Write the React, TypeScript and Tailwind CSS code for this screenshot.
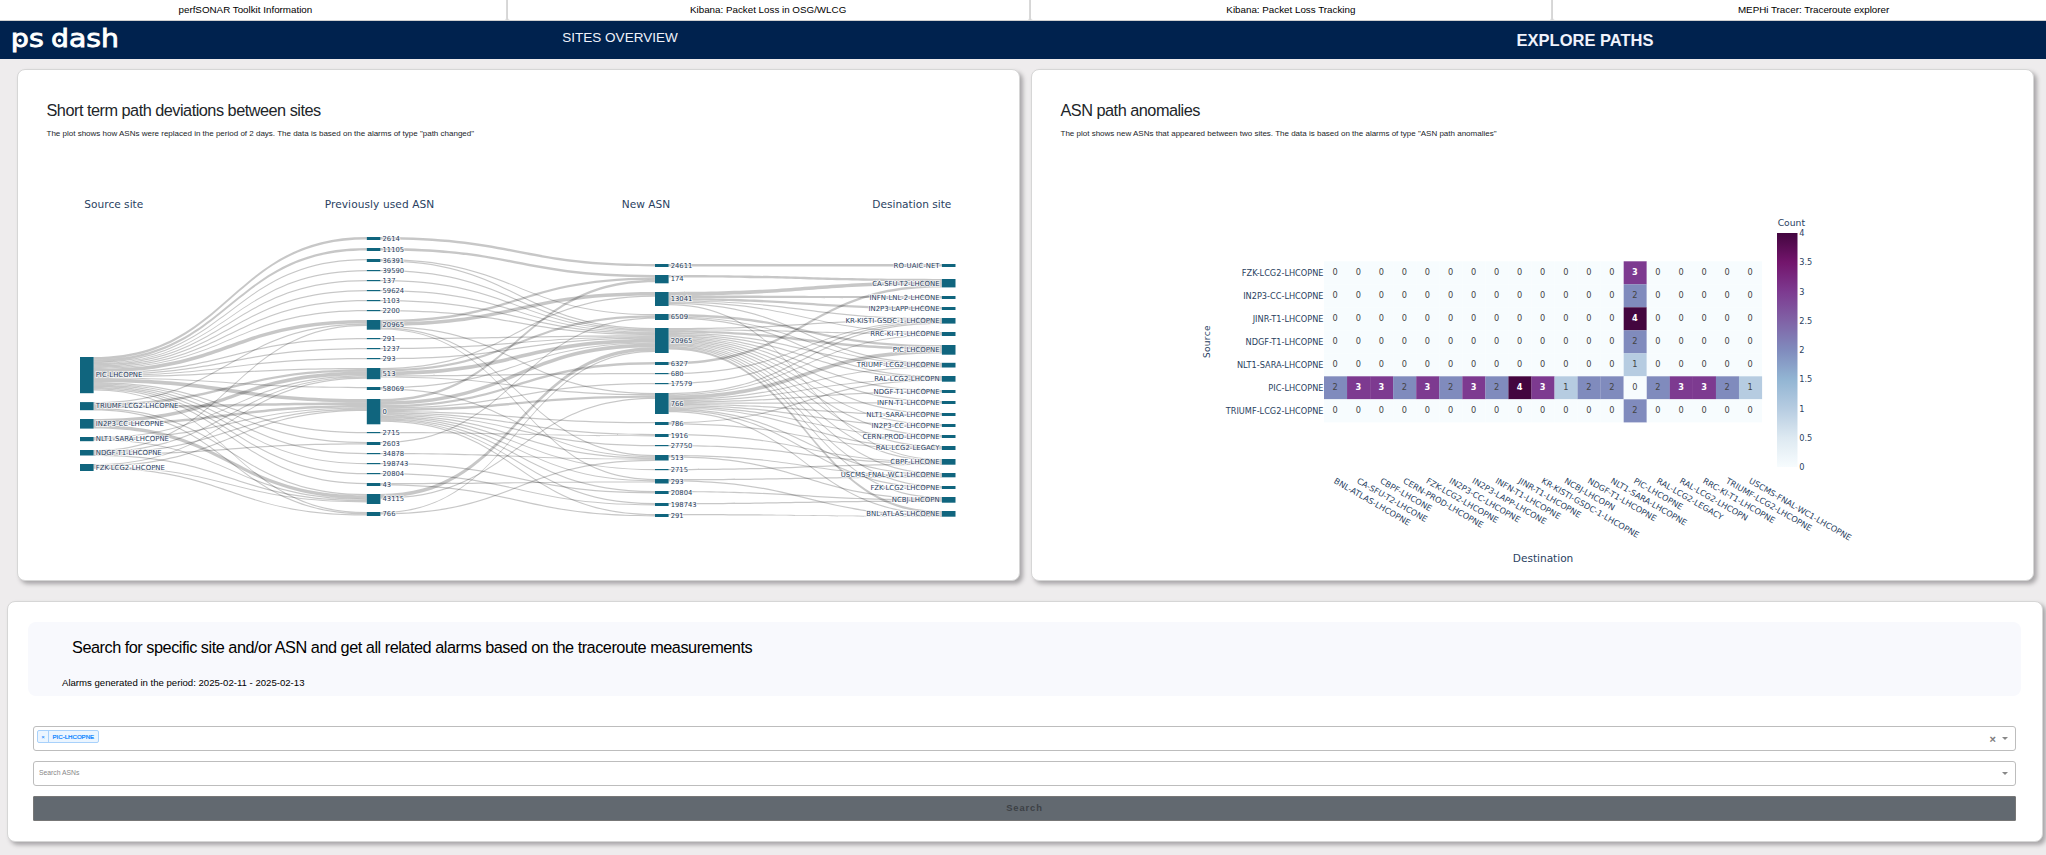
import React from "react";

type NodeDef = [label: string, top: number, bottom: number];
type LinkDef = [from: number, to: number, value: number];

const UNIT = 1.2;
const NODE_W = 13.6;
const COL_X = [80, 366.8, 655, 941.9];

const sources: NodeDef[] = [
  ["PIC-LHCOPNE", 357, 393.2],
  ["TRIUMF-LCG2-LHCOPNE", 402.1, 410.2],
  ["IN2P3-CC-LHCOPNE", 419, 428.6],
  ["NLT1-SARA-LHCOPNE", 437, 441.2],
  ["NDGF-T1-LHCOPNE", 450, 455.5],
  ["FZK-LCG2-LHCOPNE", 464, 471],
];

const previous: NodeDef[] = [
  ["2614", 237, 240],
  ["11105", 248, 251],
  ["36391", 259, 262],
  ["39590", 270, 271.2],
  ["137", 280, 281.2],
  ["59624", 290, 291.2],
  ["1103", 300, 301.2],
  ["2200", 310, 311.2],
  ["20965", 320, 329.7],
  ["291", 338, 339.2],
  ["1237", 348, 349.2],
  ["293", 358, 359.2],
  ["513", 368, 379.2],
  ["58069", 387, 390],
  ["0", 399, 424.3],
  ["2715", 432, 433.2],
  ["2603", 442, 445],
  ["34878", 453, 454.2],
  ["198743", 463, 464.2],
  ["20804", 473, 474.2],
  ["43", 483, 486],
  ["43115", 494, 504],
  ["766", 512, 516],
];

const next: NodeDef[] = [
  ["24611", 264, 267],
  ["174", 275, 283.3],
  ["13041", 292, 306],
  ["6509", 314, 320],
  ["20965", 328, 353],
  ["6327", 362, 365],
  ["680", 373, 374.2],
  ["17579", 383, 384.2],
  ["766", 393, 414],
  ["786", 422, 425],
  ["1916", 434, 437],
  ["27750", 445, 446.2],
  ["513", 455, 460.5],
  ["2715", 469, 470.2],
  ["293", 479, 483.5],
  ["20804", 491, 494],
  ["198743", 503, 506],
  ["291", 514, 517],
];

const destinations: NodeDef[] = [
  ["RO-UAIC-NET", 264, 267],
  ["CA-SFU-T2-LHCONE", 279, 287.4],
  ["INFN-LNL-2-LHCONE", 296, 299],
  ["IN2P3-LAPP-LHCONE", 307, 310],
  ["KR-KISTI-GSDC-1-LHCOPNE", 318, 323.6],
  ["RRC-KI-T1-LHCOPNE", 332, 336],
  ["PIC-LHCOPNE", 345, 354.7],
  ["TRIUMF-LCG2-LHCOPNE", 362.8, 367.5],
  ["RAL-LCG2-LHCOPN", 376, 381.7],
  ["NDGF-T1-LHCOPNE", 390, 393],
  ["INFN-T1-LHCOPNE", 401, 404],
  ["NLT1-SARA-LHCOPNE", 413, 416],
  ["IN2P3-CC-LHCOPNE", 424, 427],
  ["CERN-PROD-LHCOPNE", 435, 438],
  ["RAL-LCG2-LEGACY", 446, 450],
  ["CBPF-LHCONE", 459, 464.7],
  ["USCMS-FNAL-WC1-LHCOPNE", 473, 477.3],
  ["FZK-LCG2-LHCOPNE", 486, 489],
  ["NCBJ-LHCOPN", 497, 502.7],
  ["BNL-ATLAS-LHCOPNE", 511, 516.7],
];

const sourceLinks: LinkDef[] = [
  [0, 0, 2], [0, 1, 2], [0, 2, 1], [0, 3, 1], [0, 4, 1], [0, 5, 1], [0, 6, 1], [0, 7, 1],
  [0, 8, 3], [0, 9, 1], [0, 10, 1], [0, 11, 1], [0, 12, 1], [0, 13, 1], [0, 14, 3],
  [0, 15, 1], [0, 16, 1], [0, 17, 1], [0, 18, 1], [0, 19, 1], [0, 20, 1], [0, 22, 1],
  [1, 8, 1], [1, 12, 2], [1, 14, 2], [1, 21, 1], [1, 22, 1],
  [2, 12, 3], [2, 14, 2], [2, 21, 3],
  [3, 12, 1], [3, 14, 1], [3, 21, 1],
  [4, 8, 1], [4, 12, 1], [4, 14, 1], [4, 16, 1], [4, 21, 1],
  [5, 12, 1], [5, 14, 1], [5, 21, 1], [5, 22, 1],
];

const middleLinks: LinkDef[] = [
  [0, 0, 2], [1, 1, 2], [2, 3, 1], [2, 4, 1], [3, 4, 1], [4, 4, 1], [5, 4, 1], [6, 4, 1], [7, 4, 1],
  [8, 1, 2], [8, 2, 3], [8, 8, 1], [8, 12, 1], [8, 14, 1],
  [9, 4, 1], [10, 4, 1], [11, 4, 1],
  [12, 2, 1], [12, 3, 2], [12, 4, 3], [12, 6, 1], [12, 8, 1],
  [13, 4, 1], [13, 12, 1],
  [14, 1, 2], [14, 4, 3], [14, 5, 2], [14, 7, 1], [14, 8, 2], [14, 9, 1], [14, 10, 1], [14, 11, 1],
  [14, 12, 1], [14, 13, 1], [14, 14, 1], [14, 15, 1], [14, 16, 1], [14, 17, 1],
  [15, 10, 1], [16, 3, 1], [17, 12, 1], [18, 15, 1], [19, 16, 1], [20, 14, 1], [20, 17, 1],
  [21, 4, 3], [21, 8, 1], [22, 4, 1], [22, 12, 1],
];

const destinationLinks: LinkDef[] = [
  [0, 0, 2], [1, 1, 2],
  [2, 1, 3], [2, 2, 2], [2, 3, 2], [2, 4, 1], [2, 5, 1], [2, 7, 1], [2, 15, 1],
  [3, 6, 2], [3, 7, 1], [3, 8, 1],
  [4, 4, 1], [4, 5, 1], [4, 6, 2], [4, 7, 1], [4, 8, 1], [4, 9, 1], [4, 10, 1], [4, 11, 1], [4, 12, 1],
  [4, 13, 1], [4, 14, 1], [4, 15, 1], [4, 16, 1], [4, 17, 1], [4, 18, 1], [4, 19, 2],
  [5, 1, 2], [6, 4, 1], [7, 4, 1],
  [8, 4, 1], [8, 5, 1], [8, 6, 3], [8, 7, 1], [8, 8, 1], [8, 9, 1], [8, 10, 1], [8, 11, 1], [8, 12, 1],
  [8, 13, 1], [8, 14, 1], [8, 16, 1], [8, 17, 1], [8, 19, 1],
  [9, 8, 1], [9, 14, 1], [10, 15, 1], [11, 15, 1], [12, 18, 1], [12, 16, 1], [13, 15, 1],
  [14, 16, 1], [14, 19, 1], [15, 18, 1], [16, 18, 1], [17, 19, 1],
];

const ribbons = (left: NodeDef[], right: NodeDef[], links: LinkDef[], x0: number, x1: number) => {
  const startOf = new Map<LinkDef, number>();
  const endOf = new Map<LinkDef, number>();
  const leftOffset = left.map((n) => n[1]);
  const rightOffset = right.map((n) => n[1]);
  [...links].sort((a, b) => a[0] - b[0] || a[1] - b[1]).forEach((l) => {
    startOf.set(l, leftOffset[l[0]]);
    leftOffset[l[0]] += l[2] * UNIT;
  });
  [...links].sort((a, b) => a[1] - b[1] || a[0] - b[0]).forEach((l) => {
    endOf.set(l, rightOffset[l[1]]);
    rightOffset[l[1]] += l[2] * UNIT;
  });
  const mid = (x0 + x1) / 2;
  return links.map((l) => {
    const a = startOf.get(l)!;
    const b = endOf.get(l)!;
    const h = l[2] * UNIT;
    return `M${x0},${a}C${mid},${a} ${mid},${b} ${x1},${b}L${x1},${b + h}C${mid},${b + h} ${mid},${a + h} ${x0},${a + h}Z`;
  });
};

const columns = [sources, previous, next, destinations];
const linkSets = [sourceLinks, middleLinks, destinationLinks];
const titles: [string, number, number][] = [
  ["Source site", 84.3, 59],
  ["Previously used ASN", 324.7, 109.5],
  ["New ASN", 621.7, 48.5],
  ["Desination site", 872.3, 79],
];

function Sankey() {
  return (
    <svg width="1000" height="400" viewBox="18 160 1000 400" className="block" fontFamily="'DejaVu Sans', sans-serif">
      {titles.map(([t, x, w]) => (
        <text key={t} x={x} y="208" fontSize="10.6" fill="#2a3f5f" textLength={w}>{t}</text>
      ))}
      {linkSets.map((links, i) =>
        ribbons(columns[i], columns[i + 1], links, COL_X[i] + NODE_W, COL_X[i + 1]).map((d, j) => (
          <path key={`${i}-${j}`} d={d} fill="#000" fillOpacity="0.22" />
        )),
      )}
      {columns.map((nodes, c) =>
        nodes.map(([label, top, bottom], i) => (
          <g key={`${c}-${i}`}>
            <rect x={COL_X[c]} y={top} width={NODE_W} height={bottom - top} fill="#10657e" />
            <text
              x={c === 3 ? COL_X[3] - 2.3 : COL_X[c] + NODE_W + 2.1}
              y={(top + bottom) / 2 + 2.3}
              textAnchor={c === 3 ? "end" : "start"}
              fontSize={c === 0 || c === 3 ? 6.95 : 6.8}
              fill="#2a3f5f"
              stroke="#fff"
              strokeOpacity="0.65"
              strokeWidth="1.8"
              paintOrder="stroke"
            >
              {label}
            </text>
          </g>
        )),
      )}
    </svg>
  );
}

const rowLabels = [
  "FZK-LCG2-LHCOPNE", "IN2P3-CC-LHCOPNE", "JINR-T1-LHCOPNE", "NDGF-T1-LHCOPNE",
  "NLT1-SARA-LHCOPNE", "PIC-LHCOPNE", "TRIUMF-LCG2-LHCOPNE",
];
const colLabels = [
  "BNL-ATLAS-LHCOPNE", "CA-SFU-T2-LHCONE", "CBPF-LHCONE", "CERN-PROD-LHCOPNE", "FZK-LCG2-LHCOPNE",
  "IN2P3-CC-LHCOPNE", "IN2P3-LAPP-LHCONE", "INFN-T1-LHCOPNE", "JINR-T1-LHCOPNE", "KR-KISTI-GSDC-1-LHCOPNE",
  "NCBJ-LHCOPN", "NDGF-T1-LHCOPNE", "NLT1-SARA-LHCOPNE", "PIC-LHCOPNE", "RAL-LCG2-LEGACY",
  "RAL-LCG2-LHCOPN", "RRC-KI-T1-LHCOPNE", "TRIUMF-LCG2-LHCOPNE", "USCMS-FNAL-WC1-LHCOPNE",
];
const picColumn = [3, 2, 4, 2, 1, 0, 2];
const picRow = [2, 3, 3, 2, 3, 2, 3, 2, 4, 3, 1, 2, 2, 0, 2, 3, 3, 2, 1];
const cellFill = ["#f7fcfe", "#b6cce1", "#808bbd", "#7d3a90", "#43063f"];
const ticks = ["4", "3.5", "3", "2.5", "2", "1.5", "1", "0.5", "0"];
const CELL_W = 438 / 19;
const CELL_H = 23;

function Heatmap() {
  return (
    <svg width="1000" height="400" viewBox="1032 178 1000 400" className="block" fontFamily="'DejaVu Sans', sans-serif" fill="#2a3f5f">
      <defs>
        <linearGradient id="scale" x1="0" y1="1" x2="0" y2="0">
          <stop offset="0" stopColor="#f7fcfe" />
          <stop offset="0.125" stopColor="#dde9f1" />
          <stop offset="0.25" stopColor="#b6cce1" />
          <stop offset="0.375" stopColor="#92b5d3" />
          <stop offset="0.5" stopColor="#808bbd" />
          <stop offset="0.625" stopColor="#8062a6" />
          <stop offset="0.75" stopColor="#7d3a90" />
          <stop offset="0.875" stopColor="#73156c" />
          <stop offset="1" stopColor="#43063f" />
        </linearGradient>
      </defs>
      {rowLabels.map((label, r) => (
        <g key={label}>
          <text x="1323.5" y={261.3 + CELL_H * (r + 0.5) + 2.9} textAnchor="end" fontSize="8.2">{label}</text>
          {colLabels.map((col, c) => {
            const v = r === 5 ? picRow[c] : c === 13 ? picColumn[r] : 0;
            return (
              <g key={col}>
                <rect x={1324 + CELL_W * c} y={261.3 + CELL_H * r} width={CELL_W + 0.1} height={CELL_H + 0.1} fill={cellFill[v]} />
                <text
                  x={1324 + CELL_W * (c + 0.5) - 0.3}
                  y={261.3 + CELL_H * (r + 0.5) + 2.6}
                  textAnchor="middle"
                  fontSize="8.2"
                  fontWeight={v > 2 ? 700 : 400}
                  fill={v > 2 ? "#fff" : "#444"}
                >
                  {v}
                </text>
              </g>
            );
          })}
        </g>
      ))}
      {colLabels.map((col, c) => {
        const x = 1333.3 + CELL_W * c;
        return (
          <text key={col} x={x} y="482.6" fontSize="8.2" transform={`rotate(30 ${x} 482.6)`}>{col}</text>
        );
      })}
      <text x="1512.8" y="561.5" fontSize="10.6" textLength="60.5">Destination</text>
      <text x="1210" y="358" fontSize="9" textLength="32.5" transform="rotate(-90 1210 358)">Source</text>
      <text x="1777.7" y="225.7" fontSize="9.2" textLength="27.3">Count</text>
      <rect x="1777" y="233" width="20.5" height="234" fill="url(#scale)" />
      {ticks.map((t, i) => (
        <text key={t} x="1799.3" y={236 + i * 29.25} fontSize="8.2">{t}</text>
      ))}
    </svg>
  );
}

function Logo() {
  return (
    <svg width="112" height="34" viewBox="8 24 112 34" className="block" fill="#fff" stroke="#fff" fontFamily="'DejaVu Sans', sans-serif" fontSize="24.5">
      <text x="10.8" y="47" strokeWidth="0.8" textLength="33" lengthAdjust="spacingAndGlyphs">ps</text>
      <text x="51" y="47" strokeWidth="0.8" textLength="68" lengthAdjust="spacingAndGlyphs">dash</text>
      <circle cx="20" cy="40.5" r="1.7" stroke="none" />
      <circle cx="59.5" cy="40.5" r="1.7" stroke="none" />
    </svg>
  );
}

const tabs = [
  "perfSONAR Toolkit Information",
  "Kibana: Packet Loss in OSG/WLCG",
  "Kibana: Packet Loss Tracking",
  "MEPHi Tracer: Traceroute explorer",
];

const card = "rounded-lg border border-[#d6d6d6] bg-white shadow-[3px_3px_4px_#a8a6a8]";

function PlotCard({ title, text, children }: { title: string; text: string; children: React.ReactNode }) {
  return (
    <section className={`${card} h-[512px] w-[1003px] overflow-hidden`}>
      <div className="h-[90px] pt-[30px] pl-[29px]">
        <h2 className="text-[16.3px] leading-5 tracking-[-0.5px] text-[#212529]">{title}</h2>
        <p className="mt-1.5 text-[8px] leading-4 text-[#212529]">{text}</p>
      </div>
      {children}
    </section>
  );
}

function Caret() {
  return <span className="border-x-[3px] border-t-[3px] border-x-transparent border-t-[#888]" />;
}

export default function App() {
  return (
    <div className="h-[855px] w-[2046px] overflow-hidden bg-[#eeeced] font-['Liberation_Sans',Arial,sans-serif] text-black">
      <div className="-ml-[15px] grid h-[21px] w-[2091px] grid-cols-4 border-b border-[#d0d0d0] bg-[#d6d6d6]">
        {tabs.map((t) => (
          <div key={t} className="mr-px rounded-b-[2px] border-r border-[#d9d9d9] bg-white text-center text-[9.8px] leading-[19px]">{t}</div>
        ))}
      </div>
      <nav className="flex h-[38px] bg-[#00224e] text-[#f0f2fb]">
        <div className="w-[400px] pt-[3px] pl-2"><Logo /></div>
        <div className="w-[440px] pt-[7px] text-center text-[13.5px] leading-5">SITES OVERVIEW</div>
        <div className="flex-1 pt-2 pr-[101px] pl-[385px] text-center text-[16.5px] leading-[22px] font-bold">EXPLORE PATHS</div>
      </nav>
      <main className="pt-2.5 pl-[7px]">
        <div className="flex gap-[11px] pl-[9.5px]">
          <PlotCard title="Short term path deviations between sites" text={'The plot shows how ASNs were replaced in the period of 2 days. The data is based on the alarms of type "path changed"'}>
            <Sankey />
          </PlotCard>
          <PlotCard title="ASN path anomalies" text={'The plot shows new ASNs that appeared between two sites. The data is based on the alarms of type "ASN path anomalies"'}>
            <div className="pt-[18px]"><Heatmap /></div>
          </PlotCard>
        </div>
        <section className={`${card} mt-5 h-[241px] w-[2036px] pt-5 pl-5`}>
          <header className="h-[74px] w-[1993px] rounded-lg bg-[#f8f9fd] pt-[15px]">
            <h2 className="pl-11 text-[16.3px] leading-5 tracking-[-0.48px]">Search for specific site and/or ASN and get all related alarms based on the traceroute measurements</h2>
            <p className="mt-[18px] pl-[34px] text-[9.6px] leading-4">Alarms generated in the period: 2025-02-11 - 2025-02-13</p>
          </header>
          <div className="mt-[30px] ml-[5px] flex w-[1983px] flex-col gap-2.5">
            <div className="flex h-[25px] items-center justify-between rounded-[3px] border border-[#bdbdbd] pr-[7px] pl-[3px]">
              <div className="mb-1 flex h-[13px] rounded-[2px] border border-[#a8d1fb] bg-[#ebf5ff] text-[6.1px] leading-[11px] text-[#007eff]">
                <span className="w-[11px] border-r border-[#a8d1fb] text-center">×</span>
                <span className="px-[3.5px] [-webkit-text-stroke:0.2px]">PIC-LHCOPNE</span>
              </div>
              <div className="flex items-center gap-1.5 text-[11px] leading-3 text-[#777]">
                <span className="[-webkit-text-stroke:0.4px]">×</span>
                <Caret />
              </div>
            </div>
            <div className="flex h-[25px] items-center justify-between rounded-[3px] border border-[#bdbdbd] pr-[7px] pl-[5px] text-[6.8px] text-[#888]">
              <span className="pb-px">Search ASNs</span>
              <Caret />
            </div>
            <button className="h-[25px] rounded-[1px] border border-[#777] bg-[#626970] text-center text-[9.4px] font-bold tracking-[0.9px] text-[#3d4146]">Search</button>
          </div>
        </section>
      </main>
    </div>
  );
}
